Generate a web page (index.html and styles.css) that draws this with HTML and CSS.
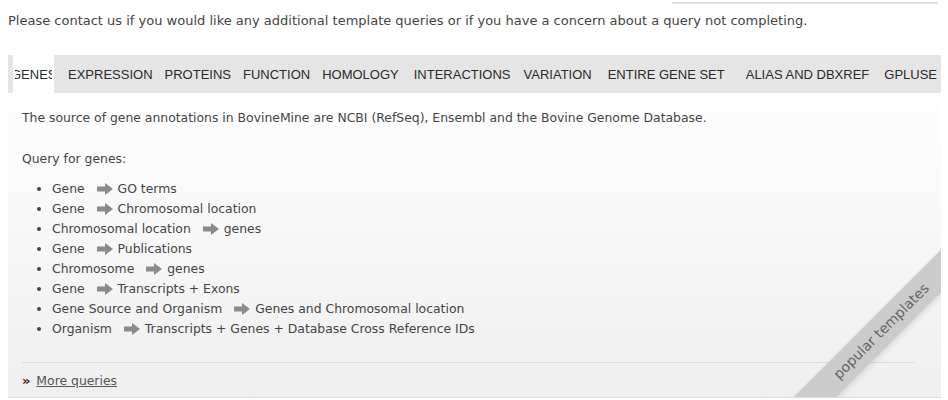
FILE: index.html
```html
<!DOCTYPE html>
<html>
<head>
<meta charset="utf-8">
<link rel="stylesheet" href="styles.css">
</head>
<body>
<div class="topline"></div>
<p class="intro">Please contact us if you would like any additional template queries or if you have a concern about a query not completing.</p>
<div class="tabs">
  <div class="tab active"><div class="clip"><span>GENES</span></div></div>
  <div class="tab t2">EXPRESSION</div>
  <div class="tab">PROTEINS</div>
  <div class="tab">FUNCTION</div>
  <div class="tab">HOMOLOGY</div>
  <div class="tab t6">INTERACTIONS</div>
  <div class="tab t7">VARIATION</div>
  <div class="tab t8">ENTIRE GENE SET</div>
  <div class="tab t9">ALIAS AND DBXREF</div>
  <div class="tab t10">GPLUSE</div>
</div>
<div class="panel">
  <p class="desc">The source of gene annotations in BovineMine are NCBI (RefSeq), Ensembl and the Bovine Genome Database.</p>
  <p class="qhead">Query for genes:</p>
  <ul class="queries">
    <li>Gene <svg class="arr" viewBox="0 0 16 12"><path d="M0 3.5H8V0L16 6L8 12V8.5H0Z"/></svg> GO terms</li>
    <li>Gene <svg class="arr" viewBox="0 0 16 12"><path d="M0 3.5H8V0L16 6L8 12V8.5H0Z"/></svg> Chromosomal location</li>
    <li>Chromosomal location <svg class="arr" viewBox="0 0 16 12"><path d="M0 3.5H8V0L16 6L8 12V8.5H0Z"/></svg> genes</li>
    <li>Gene <svg class="arr" viewBox="0 0 16 12"><path d="M0 3.5H8V0L16 6L8 12V8.5H0Z"/></svg> Publications</li>
    <li>Chromosome <svg class="arr" viewBox="0 0 16 12"><path d="M0 3.5H8V0L16 6L8 12V8.5H0Z"/></svg> genes</li>
    <li>Gene <svg class="arr" viewBox="0 0 16 12"><path d="M0 3.5H8V0L16 6L8 12V8.5H0Z"/></svg> Transcripts + Exons</li>
    <li>Gene Source and Organism <svg class="arr" viewBox="0 0 16 12"><path d="M0 3.5H8V0L16 6L8 12V8.5H0Z"/></svg> Genes and Chromosomal location</li>
    <li>Organism <svg class="arr" viewBox="0 0 16 12"><path d="M0 3.5H8V0L16 6L8 12V8.5H0Z"/></svg> Transcripts + Genes + Database Cross Reference IDs</li>
  </ul>
  <div class="more">
    <span class="raquo">&raquo;</span> <a href="#">More queries</a>
  </div>
  <div class="ribbon">popular templates</div>
</div>
</body>
</html>
```
FILE: styles.css
```css
html, body { margin: 0; padding: 0; background: #fff; }
body {
  padding: 0 8px;
  font-family: "DejaVu Sans", "Open Sans", sans-serif;
  font-size: 12.4px;
  color: #444;
}
.topline {
  height: 2px;
  margin: 2px 2px 0 664px;
  background: #e0e0e0;
}
.intro {
  margin: 0;
  padding-top: 8px;
  line-height: 18px;
  height: 43px;
  font-size: 13px;
}
.tabs {
  display: flex;
  align-items: stretch;
  height: 38px;
  width: 933px;
  background: #e5e5e5;
  font-family: "Liberation Sans", Arial, sans-serif;
  font-size: 13px;
  color: #2a2a2a;
}
.tab {
  display: flex;
  align-items: center;
  padding: 0 6px;
  white-space: nowrap;
}
.tab.active {
  margin-left: 5px;
  width: 41px;
  padding: 0 2px;
  box-sizing: border-box;
  background: #fff;
}
.clip {
  width: 37px;
  overflow: hidden;
  white-space: nowrap;
}
.clip span {
  display: inline-block;
  margin-left: -4px;
}
.t2 { margin-left: 8px; }
.t6 { margin-left: 3px; }
.t7 { margin-left: 1px; }
.t8 { margin-left: 4px; }
.t9 { margin-left: 9px; }
.t10 { margin-left: 3px; }
.panel {
  position: relative;
  overflow: hidden;
  width: 933px;
  height: 305px;
  box-sizing: border-box;
  border-bottom: 1px solid #dcdcdc;
  background: linear-gradient(to bottom, #fefefe 0%, #f7f7f7 50%, #efefef 100%);
  padding: 16px 14px 0 14px;
}
.desc { margin: 0; line-height: 18px; }
.qhead { margin: 23px 0 0; line-height: 18px; }
.queries {
  margin: 11px 0 0;
  padding: 0 0 0 30px;
  list-style: disc;
  line-height: 20px;
}
.arr {
  width: 16px;
  height: 12px;
  fill: #8a8a8a;
  vertical-align: -2px;
  margin: 0 1px 0 8px;
}
.more {
  margin-top: 23px;
  border-top: 1px solid #dcdcdc;
  padding-top: 9px;
  margin-right: 12px;
  line-height: 18px;
}
.raquo {
  color: #4a2414;
  font-weight: bold;
  font-size: 13px;
  margin-right: 2px;
}
.more a { color: #555; text-decoration: underline; }
.ribbon {
  position: absolute;
  left: 713px;
  top: 223px;
  width: 320px;
  height: 30px;
  line-height: 30px;
  text-align: center;
  background: #cbcbcb;
  color: #666;
  font-size: 14px;
  transform: rotate(-45deg);
  box-shadow: 0 2px 6px rgba(0,0,0,0.12);
}
```
